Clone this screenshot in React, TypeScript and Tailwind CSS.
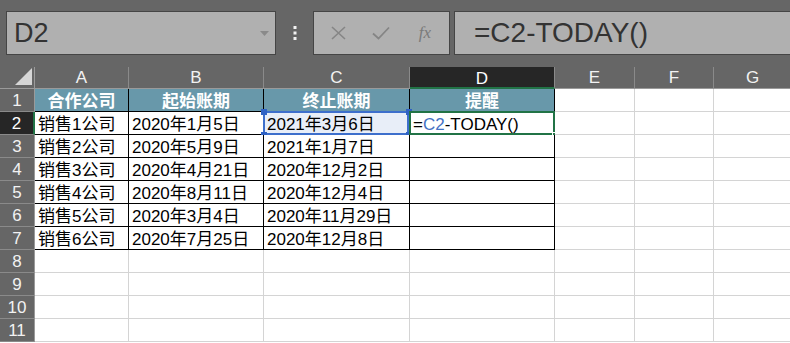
import React from 'react';

const columns = ['A', 'B', 'C', 'D', 'E', 'F', 'G'];

const rows: string[][] = [
  ['合作公司', '起始账期', '终止账期', '提醒'],
  ['销售1公司', '2020年1月5日', '2021年3月6日', ''],
  ['销售2公司', '2020年5月9日', '2021年1月7日', ''],
  ['销售3公司', '2020年4月21日', '2020年12月2日', ''],
  ['销售4公司', '2020年8月11日', '2020年12月4日', ''],
  ['销售5公司', '2020年3月4日', '2020年11月29日', ''],
  ['销售6公司', '2020年7月25日', '2020年12月8日', ''],
];

function FormulaBar() {
  return (
    <div className="flex h-[67px] items-start bg-[#666666] pl-[6px] pt-[11px]">
      <div className="relative flex h-[44px] w-[270px] items-center border border-[#454545] bg-[#b0b0b0] pl-[7px] text-[27px] leading-none text-[#333333]">
        D2
        <svg className="absolute right-[6px] top-[19px]" width="9" height="5" viewBox="0 0 9 5">
          <polygon points="0,0 9,0 4.5,5" fill="#8a8a8a" />
        </svg>
      </div>
      <div className="flex h-[44px] w-[37px] items-center justify-center">
        <svg width="4" height="14" viewBox="0 0 4 14">
          <rect x="0.5" y="0" width="3" height="3" fill="#f2f2f2" />
          <rect x="0.5" y="5.5" width="3" height="3" fill="#f2f2f2" />
          <rect x="0.5" y="11" width="3" height="3" fill="#f2f2f2" />
        </svg>
      </div>
      <div className="flex h-[44px] w-[137px] items-center border border-[#454545] bg-[#b0b0b0]">
        <div className="flex w-[46px] justify-center pl-[2px]">
          <svg width="15" height="14" viewBox="0 0 15 14">
            <path d="M1 1L14 13M14 1L1 13" stroke="#858585" strokeWidth="1.6" fill="none" />
          </svg>
        </div>
        <div className="flex w-[42px] justify-center">
          <svg width="18" height="14" viewBox="0 0 18 14">
            <path d="M1 7.5L6.5 12.5L17 1.5" stroke="#858585" strokeWidth="1.8" fill="none" />
          </svg>
        </div>
        <div className="flex w-[46px] justify-center font-['Liberation_Serif',serif] text-[17px] italic text-[#7a7a7a]">
          fx
        </div>
      </div>
      <div className="ml-[4px] flex h-[44px] flex-1 items-center border border-r-0 border-[#454545] bg-[#b0b0b0] pl-[19px] text-[28px] leading-none text-[#333333]">
        =C2-TODAY()
      </div>
    </div>
  );
}

function Cell({ r, c }: { r: number; c: number }) {
  const inTable = r <= 7 && c <= 3;
  const value = inTable ? rows[r - 1][c] : '';
  const isHead = r === 1 && c <= 3;
  const isRef = r === 2 && c === 2;
  const isActive = r === 2 && c === 3;

  return (
    <div
      className={
        'relative flex items-center overflow-visible whitespace-nowrap border-b border-r text-[17px] leading-none ' +
        (inTable ? 'border-black ' : 'border-[#d4d4d4] ') +
        (isHead
          ? 'justify-center bg-[#6898aa] pt-[2px] font-bold text-white '
          : isRef
            ? 'bg-[#e8eef8] pl-[3px] pt-[3px] text-black '
            : 'bg-white pl-[3px] pt-[3px] text-black ')
      }
    >
      {isActive ? (
        <span>
          =<span className="text-[#4472c4]">C2</span>-TODAY()
        </span>
      ) : (
        value
      )}
      {isRef && (
        <>
          <div className="pointer-events-none absolute -left-[1px] -top-[1px] bottom-[-1px] right-0 border-2 border-[#3d6fcc]" />
          <div className="absolute -left-[3px] -top-[3px] h-[6px] w-[6px] bg-[#2f62c4]" />
          <div className="absolute -right-[3px] -top-[3px] h-[6px] w-[6px] bg-[#2f62c4]" />
          <div className="absolute -bottom-[4px] -left-[3px] h-[6px] w-[6px] bg-[#2f62c4]" />
          <div className="absolute -bottom-[4px] -right-[3px] h-[6px] w-[6px] bg-[#2f62c4]" />
        </>
      )}
      {isActive && (
        <>
          <div className="pointer-events-none absolute -left-[1px] -top-[1px] bottom-[-1px] right-[-1px] border-2 border-[#217346]" />
          <div className="absolute -bottom-[4px] -right-[4px] h-[6px] w-[6px] border border-white bg-[#217346]" />
        </>
      )}
    </div>
  );
}

export default function App() {
  const rowNumbers = Array.from({ length: 11 }, (_, i) => i + 1);

  return (
    <div className="h-[343px] w-[790px] overflow-hidden bg-white font-['Liberation_Sans','Noto_Sans_CJK_SC',sans-serif]">
      <FormulaBar />
      <div className="grid w-[792px] grid-cols-[35px_94px_135px_146px_145px_80px_79px_78px] grid-rows-[22px_repeat(11,23px)]">
        <div className="flex items-end justify-end border-b border-r border-[#9a9a9a] bg-[#666666] pb-[2px] pr-[1px]">
          <svg width="18" height="18" viewBox="0 0 18 18">
            <polygon points="17,0 17,17 0,17" fill="#d6d6d6" />
          </svg>
        </div>
        {columns.map((col) => (
          <div
            key={col}
            className={
              'flex items-center justify-center text-[17px] leading-none ' +
              (col === 'D'
                ? 'border-b-2 border-r border-b-[#217346] border-r-[#8a8a8a] bg-[#262626] pt-[2px] text-white'
                : 'border-b border-r border-b-[#9a9a9a] border-r-[#8a8a8a] bg-[#666666] text-[#f2f2f2]')
            }
          >
            {col}
          </div>
        ))}
        {rowNumbers.map((r) => (
          <React.Fragment key={`row-${r}`}>
            <div
              className={
                'flex items-center justify-center border-b border-b-[#8a8a8a] text-[17px] leading-none ' +
                (r === 2
                  ? 'border-r-2 border-r-[#217346] bg-[#262626] text-white'
                  : 'border-r border-r-[#9a9a9a] bg-[#666666] text-[#f2f2f2]')
              }
            >
              {r}
            </div>
            {columns.map((_, c) => (
              <Cell key={`cell-${r}-${c}`} r={r} c={c} />
            ))}
          </React.Fragment>
        ))}
      </div>
    </div>
  );
}
